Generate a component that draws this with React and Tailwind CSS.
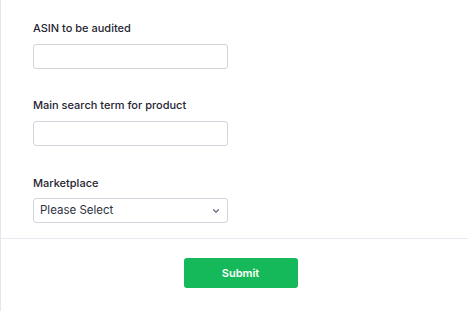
import { ChevronDown } from "lucide-react";

const Field = ({ label, children, className = "" }) => (
  <div className={`flex flex-col ${className}`}>
    <label className="text-[11px] leading-[18px] font-medium text-[#1f2533]">{label}</label>
    <div className="mt-[6px]">{children}</div>
  </div>
);

const App = () => {
  return (
    <div
      className="w-[480px] min-h-[311px] bg-white border-l border-[#e6e6ee]"
      style={{ fontFamily: "Inter, 'Noto Sans', sans-serif" }}
    >
      <div className="pl-[32px] pt-[19px]">
        <Field label="ASIN to be audited">
          <input
            type="text"
            className="w-[195px] h-[25px] rounded-[3px] border border-[#d4d4dc] bg-white outline-none px-2 text-xs"
          />
        </Field>

        <Field label="Main search term for product" className="mt-[27px]">
          <input
            type="text"
            className="w-[195px] h-[25px] rounded-[3px] border border-[#d4d4dc] bg-white outline-none px-2 text-xs"
          />
        </Field>

        <Field label="Marketplace" className="mt-[28px]">
          <div className="relative w-[195px] h-[25px] rounded-[3px] border border-[#d4d4dc] bg-white flex items-center pl-[6px]">
            <span className="text-[11.5px] text-[#2d3240]">Please Select</span>
            <ChevronDown className="absolute right-[6px] top-[7px] h-[10px] w-[10px] text-[#6b7285]" strokeWidth={3} />
          </div>
        </Field>
      </div>

      {/* Footer */}
      <div className="mt-[15px] border-t border-[#e8e8f0] flex justify-center pt-[19px]">
        <button className="w-[114px] h-[30px] rounded-[3px] bg-[#16b95a] text-white text-[11px] font-semibold">
          Submit
        </button>
      </div>
    </div>
  );
};

export default App;
